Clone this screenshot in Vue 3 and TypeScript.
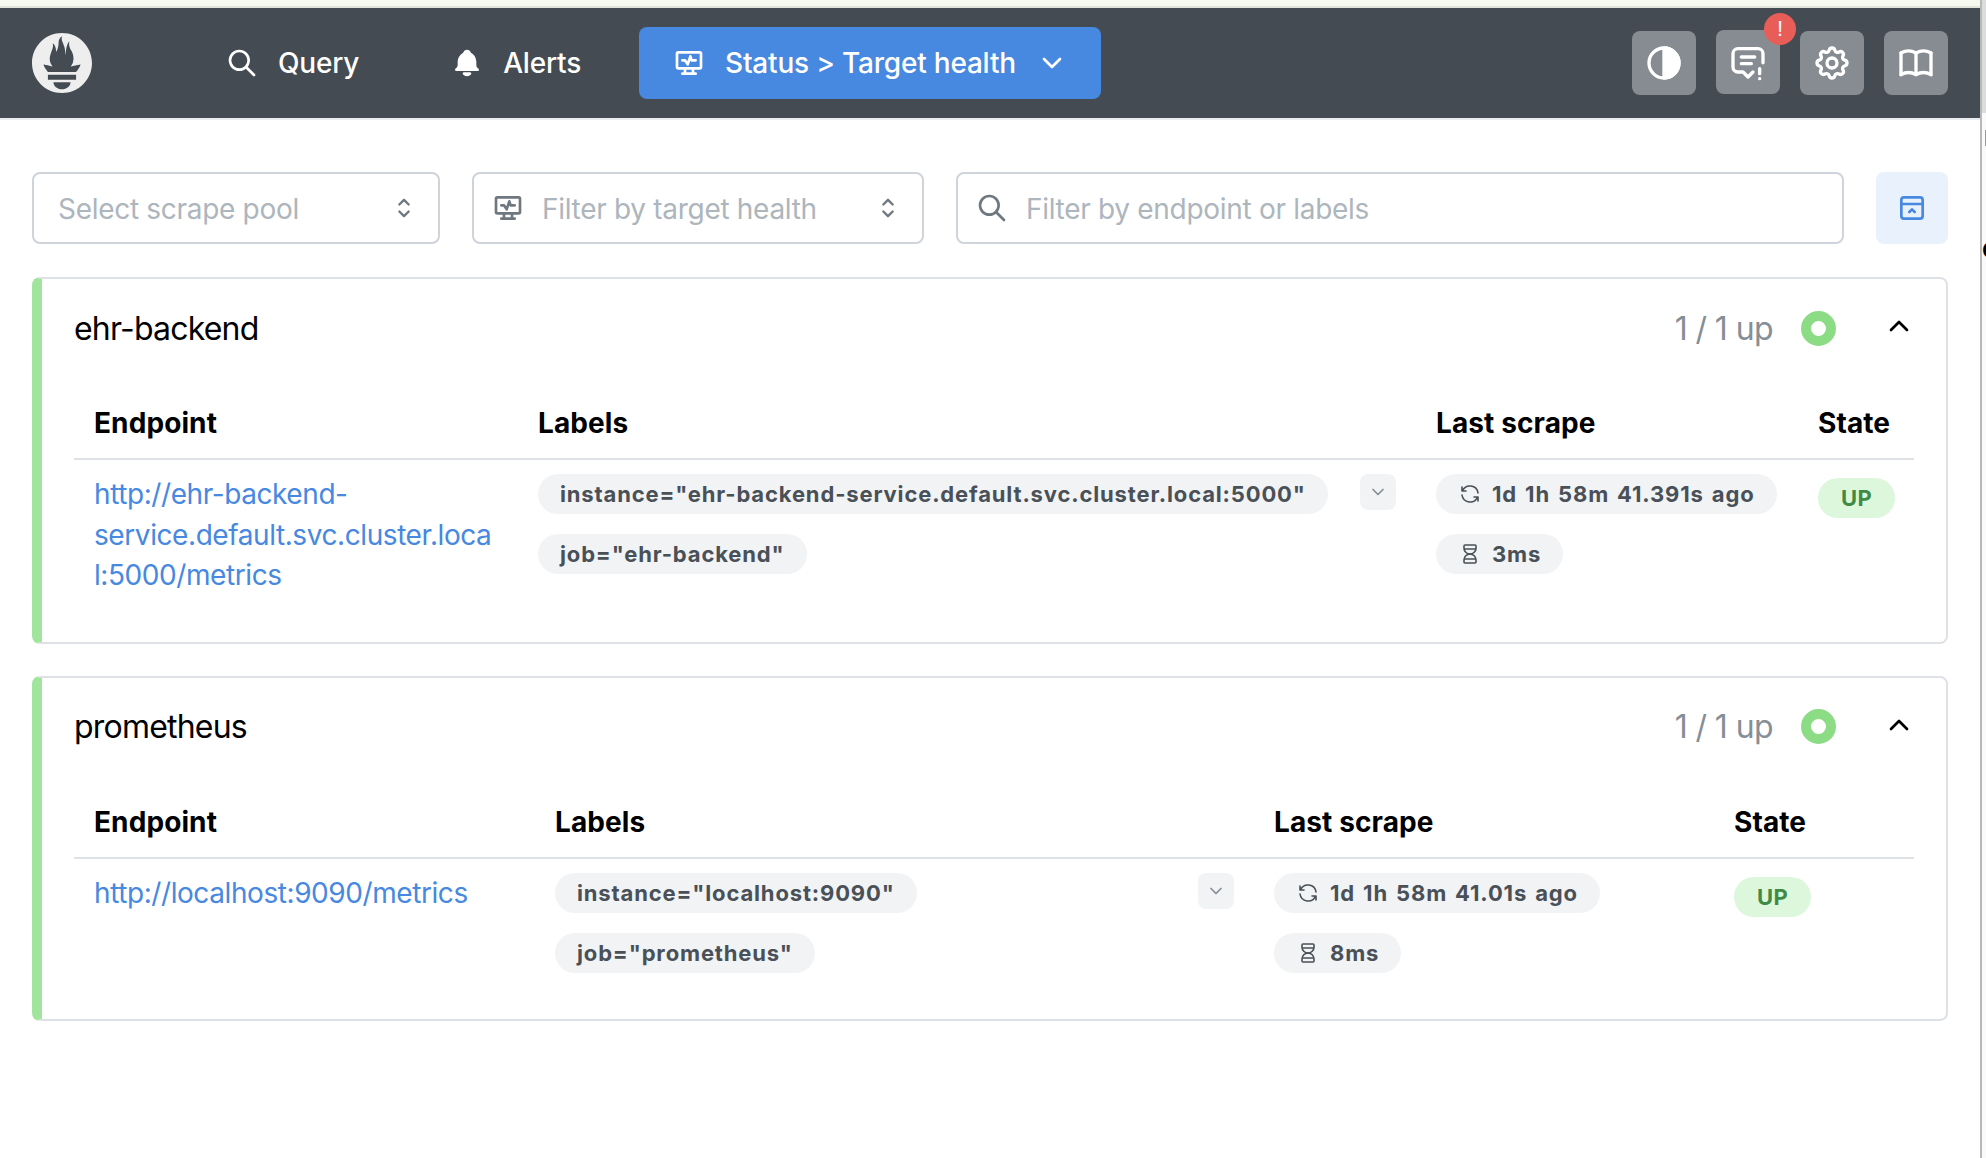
<script setup lang="ts">
interface Target {
  url: string
  labels: string[]
  scrape: string
  duration: string
}

interface Pool {
  name: string
  cols: string
  target: Target
}

const pools: Pool[] = [
  {
    name: 'ehr-backend',
    cols: '444px 898px 382px 116px',
    target: {
      url: 'http://ehr-backend-service.default.svc.cluster.local:5000/metrics',
      labels: ['instance="ehr-backend-service.default.svc.cluster.local:5000"', 'job="ehr-backend"'],
      scrape: '1d 1h 58m 41.391s ago',
      duration: '3ms'
    }
  },
  {
    name: 'prometheus',
    cols: '461px 719px 460px 200px',
    target: {
      url: 'http://localhost:9090/metrics',
      labels: ['instance="localhost:9090"', 'job="prometheus"'],
      scrape: '1d 1h 58m 41.01s ago',
      duration: '8ms'
    }
  }
]
</script>

<template>
  <div class="page">
    <header class="topbar">
      <svg class="logo" viewBox="0 0 24 24"><path fill="#eeeeee" d="M12 0C5.373 0 0 5.372 0 11.999c0 6.627 5.373 12 12 12s12-5.373 12-12S18.627 0 12 0zm0 22.46c-1.885 0-3.414-1.26-3.414-2.81h6.828c0 1.55-1.529 2.81-3.414 2.81zm5.64-3.745H6.36v-2.046h11.28v2.046zm-.04-3.098H6.391c-.037-.043-.075-.086-.111-.13-1.155-1.401-1.427-2.133-1.691-2.879-.005-.025 1.4.287 2.395.511 0 0 .513.119 1.262.255-.72-.843-1.147-1.915-1.147-3.011 0-2.406 1.845-4.508 1.179-6.207.648.053 1.342 1.369 1.389 3.428.689-.952.977-2.691.977-3.757 0-1.103.727-2.385 1.454-2.429-.648 1.068.168 1.984.894 4.256.272.854.237 2.29.447 3.201.07-1.892.395-4.652 1.595-5.605-.529 1.2.079 2.702.494 3.424.671 1.164 1.078 2.047 1.078 3.716a4.642 4.642 0 0 1-1.11 2.996c.792-.149 1.34-.283 1.34-.283l2.573-.502s-.374 1.538-1.81 3.016z"/></svg>
      <nav class="nav">
        <a class="nav-link">
          <svg class="icon32" viewBox="0 0 24 24"><path d="M10 10m-7 0a7 7 0 1 0 14 0a7 7 0 1 0 -14 0"/><path d="M21 21l-6 -6"/></svg>
          Query
        </a>
        <a class="nav-link">
          <svg class="icon32 solid" viewBox="0 0 24 24"><path d="M14.235 19c.865 0 1.322 1.024 .745 1.668a3.992 3.992 0 0 1 -2.98 1.332a3.992 3.992 0 0 1 -2.98 -1.332c-.552 -.616 -.158 -1.579 .634 -1.661l.11 -.006h4.471z"/><path d="M12 2c1.358 0 2.506 .903 2.875 2.141l.046 .171l.008 .043a8.013 8.013 0 0 1 4.024 6.069l.028 .287l.019 .289v2.931l.021 .136a3 3 0 0 0 1.143 1.847l.167 .117l.162 .099c.86 .487 .56 1.766 -.377 1.864l-.116 .006h-16c-1.028 0 -1.387 -1.364 -.493 -1.87a3 3 0 0 0 1.472 -2.063l.021 -.143l.001 -2.97a8 8 0 0 1 3.821 -6.454l.248 -.146l.01 -.043a3.003 3.003 0 0 1 2.562 -2.29l.182 -.017l.176 -.004z"/></svg>
          Alerts
        </a>
        <a class="nav-link active">
          <svg class="icon32" viewBox="0 0 24 24"><path d="M3 4m0 1a1 1 0 0 1 1 -1h16a1 1 0 0 1 1 1v10a1 1 0 0 1 -1 1h-16a1 1 0 0 1 -1 -1z"/><path d="M7 20h10"/><path d="M9 16v4"/><path d="M15 16v4"/><path d="M7 10h2l2 3l2 -6l1 3h3"/></svg>
          <span>Status &gt; Target health</span>
          <svg class="icon32 chev" viewBox="0 0 24 24"><path d="M6 9l6 6l6 -6"/></svg>
        </a>
      </nav>
      <div class="actions">
        <button class="action">
          <svg class="icon40" viewBox="0 0 24 24"><path d="M12 3a9 9 0 1 0 0 18a9 9 0 0 0 0 -18z"/><path class="half" d="M12 3a9 9 0 0 1 0 18z"/></svg>
        </button>
        <button class="action raised">
          <svg class="icon40" viewBox="0 0 24 24"><path d="M8 9h8"/><path d="M8 13h6"/><path d="M15 18l-3 3l-3 -3h-3a3 3 0 0 1 -3 -3v-8a3 3 0 0 1 3 -3h12a3 3 0 0 1 3 3v5.5"/><path d="M19 16v3"/><path d="M19 22v.01"/></svg>
          <span class="alert-dot">!</span>
        </button>
        <button class="action">
          <svg class="icon40" viewBox="0 0 24 24"><path d="M10.325 4.317c.426 -1.756 2.924 -1.756 3.35 0a1.724 1.724 0 0 0 2.573 1.066c1.543 -.94 3.31 .826 2.37 2.37a1.724 1.724 0 0 0 1.065 2.572c1.756 .426 1.756 2.924 0 3.35a1.724 1.724 0 0 0 -1.066 2.573c.94 1.543 -.826 3.31 -2.37 2.37a1.724 1.724 0 0 0 -2.572 1.065c-.426 1.756 -2.924 1.756 -3.35 0a1.724 1.724 0 0 0 -2.573 -1.066c-1.543 .94 -3.31 -.826 -2.37 -2.37a1.724 1.724 0 0 0 -1.065 -2.572c-1.756 -.426 -1.756 -2.924 0 -3.35a1.724 1.724 0 0 0 1.066 -2.573c-.94 -1.543 .826 -3.31 2.37 -2.37c1 .608 2.296 .07 2.572 -1.065z"/><path d="M9 12a3 3 0 1 0 6 0a3 3 0 0 0 -6 0"/></svg>
        </button>
        <button class="action">
          <svg class="icon40" viewBox="0 0 24 24"><path d="M3 19a9 9 0 0 1 9 0a9 9 0 0 1 9 0"/><path d="M3 6a9 9 0 0 1 9 0a9 9 0 0 1 9 0"/><path d="M3 6l0 13"/><path d="M12 6l0 13"/><path d="M21 6l0 13"/></svg>
        </button>
      </div>
    </header>

    <main class="content">
      <div class="filters">
        <div class="field pool-field">
          <span class="placeholder">Select scrape pool</span>
          <svg class="icon28 selector" viewBox="0 0 24 24"><path d="M8 9l4 -4l4 4"/><path d="M16 15l-4 4l-4 -4"/></svg>
        </div>
        <div class="field health-field">
          <svg class="icon32 muted" viewBox="0 0 24 24"><path d="M3 4m0 1a1 1 0 0 1 1 -1h16a1 1 0 0 1 1 1v10a1 1 0 0 1 -1 1h-16a1 1 0 0 1 -1 -1z"/><path d="M7 20h10"/><path d="M9 16v4"/><path d="M15 16v4"/><path d="M7 10h2l2 3l2 -6l1 3h3"/></svg>
          <span class="placeholder">Filter by target health</span>
          <svg class="icon28 selector" viewBox="0 0 24 24"><path d="M8 9l4 -4l4 4"/><path d="M16 15l-4 4l-4 -4"/></svg>
        </div>
        <div class="field search-field">
          <svg class="icon32 muted" viewBox="0 0 24 24"><path d="M10 10m-7 0a7 7 0 1 0 14 0a7 7 0 1 0 -14 0"/><path d="M21 21l-6 -6"/></svg>
          <span class="placeholder">Filter by endpoint or labels</span>
        </div>
        <button class="collapse-btn">
          <svg class="icon32" viewBox="0 0 24 24"><path d="M20 6v12a2 2 0 0 1 -2 2h-12a2 2 0 0 1 -2 -2v-12a2 2 0 0 1 2 -2h12a2 2 0 0 1 2 2z"/><path d="M4 9h16"/><path d="M10 15l2 -2l2 2"/></svg>
        </button>
      </div>

      <section v-for="pool in pools" :key="pool.name" class="card">
        <div class="card-head">
          <span class="pool-name">{{ pool.name }}</span>
          <div class="pool-status">
            <span class="count">1 / 1 up</span>
            <span class="ring"></span>
            <svg class="icon32 toggle" viewBox="0 0 24 24"><path d="M6 15l6 -6l6 6"/></svg>
          </div>
        </div>

        <div class="grid head-row" :style="{ gridTemplateColumns: pool.cols }">
          <div>Endpoint</div>
          <div>Labels</div>
          <div>Last scrape</div>
          <div>State</div>
        </div>
        <div class="grid body-row" :style="{ gridTemplateColumns: pool.cols }">
          <div class="endpoint-cell"><a class="endpoint">{{ pool.target.url }}</a></div>
          <div class="labels-cell">
            <div class="pill-stack">
              <span v-for="label in pool.target.labels" :key="label" class="pill">{{ label }}</span>
            </div>
            <button class="more">
              <svg viewBox="0 0 24 24"><path d="M6 9l6 6l6 -6"/></svg>
            </button>
          </div>
          <div class="pill-stack">
            <span class="pill">
              <svg class="pill-icon" viewBox="0 0 24 24"><path d="M20 11a8.1 8.1 0 0 0 -15.5 -2m-.5 -4v4h4"/><path d="M4 13a8.1 8.1 0 0 0 15.5 2m.5 4v-4h-4"/></svg>
              {{ pool.target.scrape }}
            </span>
            <span class="pill">
              <svg class="pill-icon" viewBox="0 0 24 24"><path d="M6.5 7h11"/><path d="M6.5 17h11"/><path d="M6 20v-2a6 6 0 1 1 12 0v2a1 1 0 0 1 -1 1h-10a1 1 0 0 1 -1 -1z"/><path d="M6 4v2a6 6 0 1 0 12 0v-2a1 1 0 0 0 -1 -1h-10a1 1 0 0 0 -1 1z"/></svg>
              {{ pool.target.duration }}
            </span>
          </div>
          <div><span class="up">UP</span></div>
        </div>
      </section>
    </main>

    <div class="edge">
      <span class="thumb"></span>
      <span class="cut-text">e</span>
    </div>
  </div>
</template>

<style>
html,
body {
  margin: 0;
  background: #fff;
  overflow: hidden;
}
</style>

<style scoped>
.page {
  position: relative;
  width: 1986px;
  height: 1158px;
  box-sizing: border-box;
  padding-right: 6px;
  padding-top: 8px;
  font-family: Inter, 'Liberation Sans', sans-serif;
  background: #fff;
  overflow: hidden;
}

.page::before {
  content: '';
  position: absolute;
  left: 0;
  top: 0;
  width: 1980px;
  height: 8px;
  background: #f6f9f0;
  border-bottom: 2px solid #dfe5d8;
  box-sizing: border-box;
}

.edge {
  position: absolute;
  top: 0;
  right: 0;
  width: 6px;
  height: 100%;
  box-sizing: border-box;
  border-left: 2px solid #b8b8b8;
  background: linear-gradient(#dcdcdc 0, #dcdcdc 113px, #fafafa 113px);
  overflow: hidden;
}

.thumb {
  position: absolute;
  left: 3px;
  top: 130px;
  width: 1px;
  height: 16px;
  background: #999;
}

.cut-text {
  position: absolute;
  left: 0;
  top: 232px;
  color: #000;
  font-size: 28px;
  font-weight: 700;
  line-height: 32px;
}

svg {
  fill: none;
  stroke: currentColor;
  stroke-width: 2;
  stroke-linecap: round;
  stroke-linejoin: round;
  flex: none;
}

.topbar {
  display: flex;
  align-items: center;
  height: 112px;
  box-sizing: border-box;
  padding: 0 32px;
  background: #444b52;
  color: #fff;
  border-bottom: 2px solid #e9ecef;
}

.logo {
  width: 60px;
  height: 60px;
  stroke: none;
}

.nav {
  display: flex;
  align-items: center;
  gap: 26px;
  margin-left: 100px;
}

.nav-link {
  display: flex;
  align-items: center;
  gap: 20px;
  height: 72px;
  padding: 0 32px 0 34px;
  border-radius: 8px;
  font-size: 28px;
  font-weight: 500;
  letter-spacing: -0.2px;
}

.nav-link.active {
  padding-right: 33px;
  background: #4788e0;
}

.nav-link.active .chev {
  margin-left: 0;
}

.icon28 {
  width: 28px;
  height: 28px;
}

.icon32 {
  width: 32px;
  height: 32px;
}

.icon40 {
  width: 40px;
  height: 40px;
}

.solid {
  fill: currentColor;
  stroke: none;
}

.half {
  fill: currentColor;
}

.actions {
  display: flex;
  align-items: center;
  gap: 20px;
  margin-left: auto;
}

.action {
  position: relative;
  display: flex;
  align-items: center;
  justify-content: center;
  width: 64px;
  height: 64px;
  padding: 0;
  border: none;
  border-radius: 8px;
  background: #878c93;
  color: #fff;
}

.action.raised {
  top: -1px;
}

.alert-dot {
  position: absolute;
  top: -17px;
  right: -16px;
  width: 32px;
  height: 32px;
  border-radius: 50%;
  background: #e85d58;
  color: #fff;
  font-size: 22px;
  font-weight: 500;
  line-height: 32px;
  text-align: center;
}

.content {
  padding: 52px 32px 0;
}

.filters {
  display: flex;
  gap: 32px;
  margin-bottom: 33px;
}

.field {
  display: flex;
  align-items: center;
  height: 72px;
  box-sizing: border-box;
  border: 2px solid #ced4da;
  border-radius: 8px;
  background: #fff;
}

.pool-field {
  width: 408px;
  padding: 0 20px 0 24px;
  justify-content: space-between;
}

.health-field {
  width: 452px;
  padding: 0 20px 0 18px;
}

.health-field .placeholder {
  margin-left: 18px;
}

.health-field .selector {
  margin-left: auto;
}

.search-field {
  flex: 1;
  padding: 0 0 0 18px;
  gap: 18px;
}

.placeholder {
  padding-top: 2px;
  color: #adb5bd;
  font-size: 28px;
  letter-spacing: -0.3px;
}

.selector {
  color: #6f777f;
}

.muted {
  color: #6f777f;
}

.collapse-btn {
  display: flex;
  align-items: center;
  justify-content: center;
  width: 72px;
  height: 72px;
  padding: 0;
  border: none;
  border-radius: 8px;
  background: #e9f2fc;
  color: #4788e0;
}

.card {
  width: 1916px;
  box-sizing: border-box;
  margin-bottom: 32px;
  padding: 23px 32px 32px 32px;
  border: 2px solid #dee2e6;
  border-left: 10px solid #a0e49d;
  border-radius: 8px;
  background: #fff;
}

.card-head {
  display: flex;
  align-items: center;
  justify-content: space-between;
  height: 52px;
  margin-bottom: 49px;
}

.pool-name {
  font-size: 32px;
  color: #000;
  letter-spacing: -0.8px;
}

.pool-status {
  display: flex;
  align-items: center;
}

.count {
  font-size: 32px;
  color: #868e96;
  letter-spacing: -0.6px;
}

.ring {
  width: 15px;
  height: 15px;
  margin-left: 28px;
  border: 10px solid #8cdc85;
  border-radius: 50%;
}

.toggle {
  margin-left: 47px;
  margin-right: -1px;
  margin-bottom: 4px;
  color: #000;
}

.grid {
  display: grid;
  width: 1840px;
}

.head-row {
  padding-bottom: 15px;
  border-bottom: 2px solid #dee2e6;
  font-size: 28px;
  font-weight: 700;
  color: #000;
  line-height: 40px;
  letter-spacing: 0.1px;
}

.head-row > div {
  padding: 0 20px;
}

.body-row {
  padding-top: 14px;
  padding-bottom: 14px;
}

.body-row > div {
  padding: 0 20px;
  min-width: 0;
}

.body-row > .endpoint-cell {
  padding-right: 24px;
}

.endpoint {
  display: block;
  color: #4788e0;
  font-size: 28px;
  line-height: 40.5px;
  letter-spacing: -0.42px;
  overflow-wrap: anywhere;
}

.labels-cell {
  display: flex;
  justify-content: space-between;
  align-items: flex-start;
}

.pill-stack {
  display: flex;
  flex-direction: column;
  align-items: flex-start;
  gap: 20px;
}

.pill {
  display: inline-flex;
  align-items: center;
  gap: 10px;
  height: 40px;
  padding: 0 22px;
  border-radius: 20px;
  background: #f1f3f5;
  color: #495057;
  font-size: 22px;
  font-weight: 700;
  letter-spacing: 0.85px;
  word-spacing: 2px;
  white-space: nowrap;
}

.pill-icon {
  width: 24px;
  height: 24px;
  stroke-width: 1.6;
}

.more {
  display: flex;
  align-items: center;
  justify-content: center;
  width: 36px;
  height: 36px;
  padding: 0;
  border: none;
  border-radius: 8px;
  background: #f1f3f5;
  color: #868e96;
}

.more svg {
  width: 20px;
  height: 20px;
}

.up {
  display: inline-flex;
  align-items: center;
  height: 40px;
  margin-top: 4px;
  padding: 0 23px;
  border-radius: 20px;
  background: #dcf7dc;
  color: #3f8a44;
  font-size: 22px;
  font-weight: 700;
  letter-spacing: 0.5px;
}
</style>
